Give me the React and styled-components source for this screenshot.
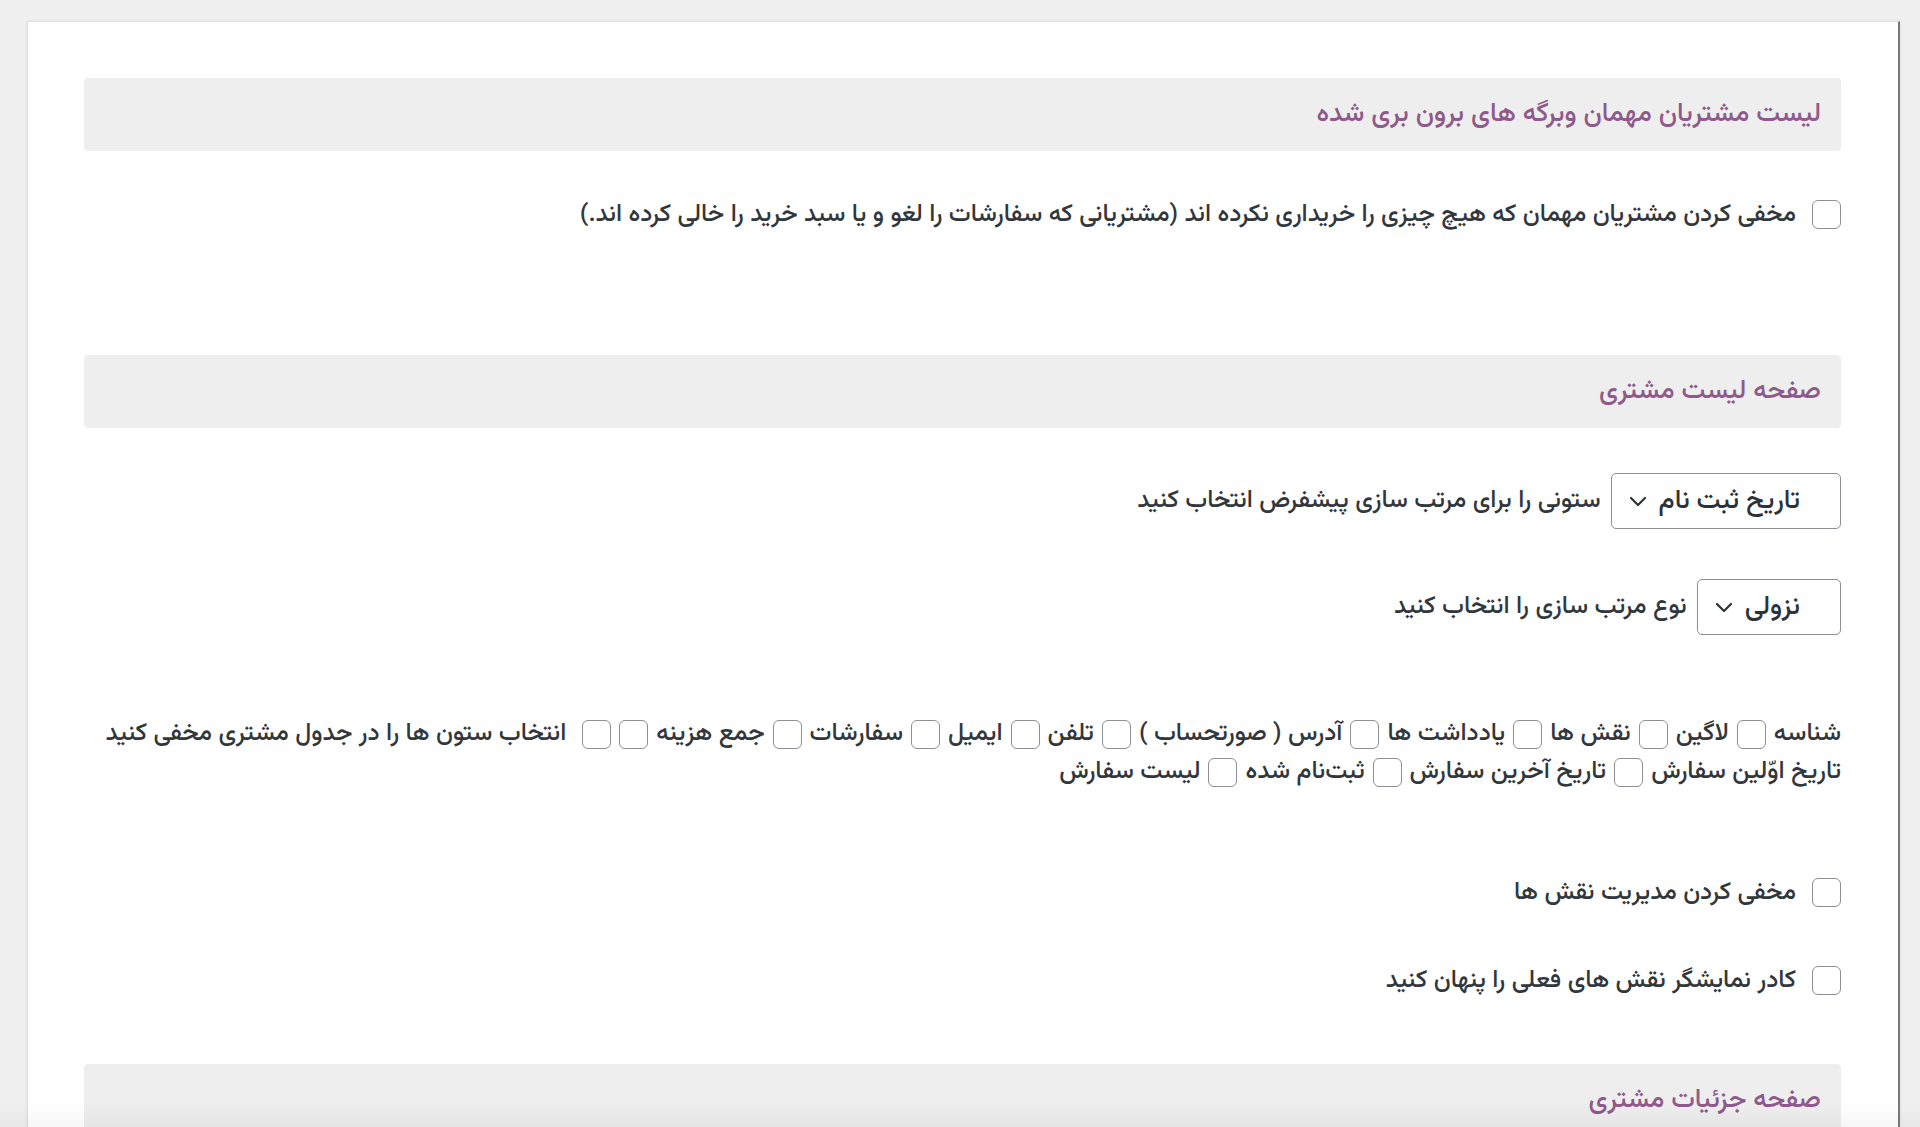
import React from "react";
import styled, { createGlobalStyle } from "styled-components";

const Global = createGlobalStyle`
  html, body {
    margin: 0;
    padding: 0;
    height: 1127px;
    overflow: hidden;
    background: #f0f0f1;
  }
  body {
    font-family: "Vazirmatn", "Noto Sans Arabic", "DejaVu Sans", sans-serif;
    color: #32373c;
  }
  * { box-sizing: border-box; }
`;

const Page = styled.div`
  padding: 21px 20px 0 27px;
  height: 1127px;
`;

const Panel = styled.div`
  direction: rtl;
  background: #ffffff;
  border-top: 1px solid #e2e2e2;
  border-left: 1px solid #dddddd;
  border-right: 2px solid #7a7a7a;
  box-shadow: 0 0 3px rgba(0, 0, 0, 0.08);
  min-height: 1200px;
  padding: 56px 57px 0 56px;
`;

const SectionHeader = styled.div`
  height: 73px;
  background: #eeeeee;
  border-radius: 4px;
  display: flex;
  align-items: center;
  padding: 0 20px;
  margin-top: ${(p) => p.$mt || 0}px;
`;

const SectionTitle = styled.h2`
  margin: 0;
  font-size: 26.6px;
  font-weight: 500;
  color: #8f5a8b;
`;

const CheckRow = styled.label`
  display: flex;
  align-items: center;
  gap: 16px;
  margin-top: ${(p) => p.$mt || 0}px;
  font-size: 24.7px;
  font-weight: 500;
  line-height: 28px;
`;

const Box = styled.span`
  flex: none;
  display: inline-block;
  width: 29px;
  height: 29px;
  border: 1.5px solid #8c8f94;
  border-radius: 6px;
  background: #fff;
`;

const SelectRow = styled.div`
  display: flex;
  align-items: center;
  gap: 10px;
  margin-top: ${(p) => p.$mt || 0}px;
  font-size: 24.7px;
  font-weight: 500;
`;

const SelectBox = styled.div`
  display: flex;
  align-items: center;
  gap: 12px;
  height: 56px;
  padding: 0 40px 0 17px;
  border: 1.5px solid #8c8f94;
  border-radius: 5px;
  background: #fff;
  font-size: 26.7px;
  color: #2c3338;
`;

const Chevron = () => (
  <svg width="18" height="11" viewBox="0 0 18 11" fill="none">
    <path d="M2 2l7 7 7-7" stroke="#2c3338" strokeWidth="2.2" strokeLinecap="round" strokeLinejoin="round" />
  </svg>
);

const ColumnsBlock = styled.div`
  margin-top: 80px;
  display: flex;
  flex-direction: column;
  font-size: 24.7px;
  font-weight: 500;
`;

const ColumnLine = styled.div`
  display: flex;
  align-items: center;
  gap: 8px;
  height: 38px;
  white-space: nowrap;
`;

const ColumnItem = styled.label`
  display: inline-flex;
  align-items: center;
  gap: 8px;
`;

const GroupLabel = styled.span`
  margin-right: 8px;
`;

const BottomFade = styled.div`
  position: fixed;
  left: 0;
  right: 0;
  bottom: 0;
  height: 24px;
  pointer-events: none;
  background: linear-gradient(to bottom, rgba(0, 0, 0, 0), rgba(0, 0, 0, 0.035));
`;

const line1 = ["شناسه", "لاگین", "نقش ها", "یادداشت ها", "آدرس ( صورتحساب )", "تلفن", "ایمیل", "سفارشات", "جمع هزینه"];
const line2 = ["تاریخ اوّلین سفارش", "تاریخ آخرین سفارش", "ثبت‌نام شده", "لیست سفارش"];

export default function App() {
  return (
    <>
      <Global />
      <Page>
        <Panel>
          <SectionHeader>
            <SectionTitle>لیست مشتریان مهمان وبرگه های برون بری شده</SectionTitle>
          </SectionHeader>
          <CheckRow $mt={49}>
            <Box />
            <span>مخفی کردن مشتریان مهمان که هیچ چیزی را خریداری نکرده اند (مشتریانی که سفارشات را لغو و یا سبد خرید را خالی کرده اند.)</span>
          </CheckRow>

          <SectionHeader $mt={126}>
            <SectionTitle>صفحه لیست مشتری</SectionTitle>
          </SectionHeader>
          <SelectRow $mt={45}>
            <SelectBox>
              <span>تاریخ ثبت نام</span>
              <Chevron />
            </SelectBox>
            <span>ستونی را برای مرتب سازی پیشفرض انتخاب کنید</span>
          </SelectRow>
          <SelectRow $mt={50}>
            <SelectBox>
              <span>نزولی</span>
              <Chevron />
            </SelectBox>
            <span>نوع مرتب سازی را انتخاب کنید</span>
          </SelectRow>

          <ColumnsBlock>
            <ColumnLine>
              {line1.map((t) => (
                <ColumnItem key={t}>
                  <span>{t}</span>
                  <Box />
                </ColumnItem>
              ))}
              <Box />
              <GroupLabel>انتخاب ستون ها را در جدول مشتری مخفی کنید</GroupLabel>
            </ColumnLine>
            <ColumnLine>
              {line2.map((t, i) => (
                <ColumnItem key={t}>
                  <span>{t}</span>
                  {i < line2.length - 1 && <Box />}
                </ColumnItem>
              ))}
            </ColumnLine>
          </ColumnsBlock>

          <CheckRow $mt={87}>
            <Box />
            <span>مخفی کردن مدیریت نقش ها</span>
          </CheckRow>
          <CheckRow $mt={59}>
            <Box />
            <span>کادر نمایشگر نقش های فعلی را پنهان کنید</span>
          </CheckRow>

          <SectionHeader $mt={69}>
            <SectionTitle>صفحه جزئیات مشتری</SectionTitle>
          </SectionHeader>
        </Panel>
      </Page>
      <BottomFade />
    </>
  );
}
